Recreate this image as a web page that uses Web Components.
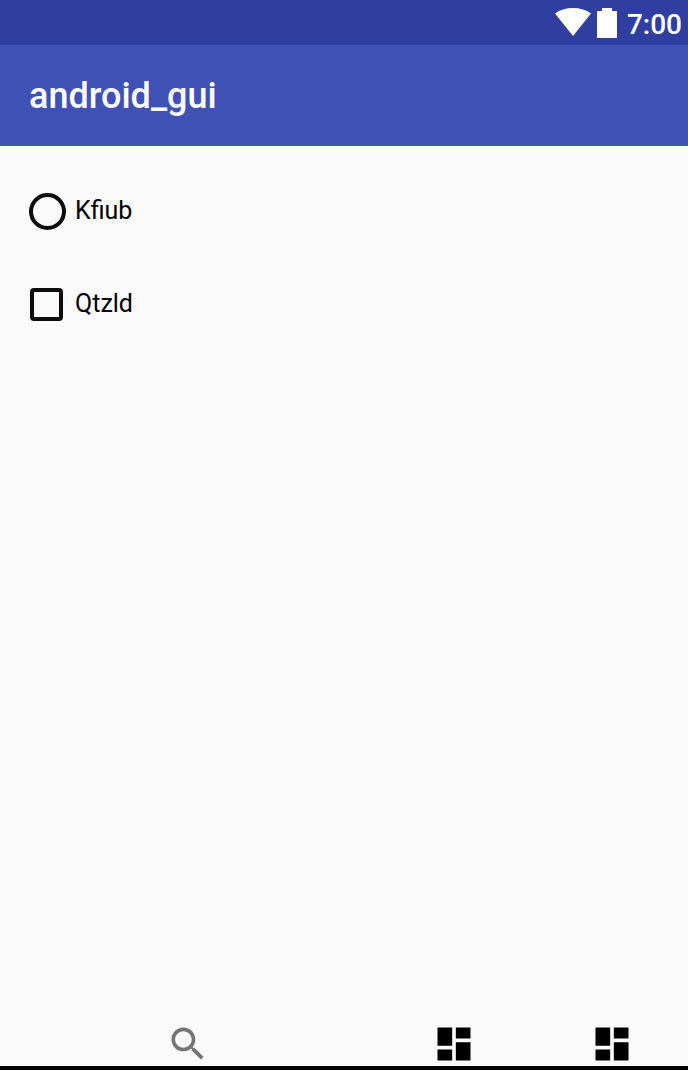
<!DOCTYPE html>
<html lang="en">
<head>
<meta charset="utf-8">
<meta name="viewport" content="width=device-width, initial-scale=1">
<title>android_gui</title>
<style>
html, body { margin: 0; height: 100%; background: #fafafa; font-family: Roboto, sans-serif; color: #000; }
</style>
</head>
<body>
<app-screen>
  <status-bar slot="top">7:00</status-bar>
  <app-bar slot="top">android_gui</app-bar>
  <choice-row type="radio">Kfiub</choice-row>
  <choice-row type="checkbox">Qtzld</choice-row>
  <tool-bar slot="bottom"></tool-bar>
</app-screen>
<script>
class AppScreen extends HTMLElement {
  constructor() {
    super();
    this.attachShadow({ mode: 'open' }).innerHTML = `
      <style>
        :host { display: flex; flex-direction: column; min-height: 100vh; }
        main { flex: 1; display: flex; flex-direction: column; gap: 45px; padding: 41px 28px; }
      </style>
      <slot name="top"></slot>
      <main><slot></slot></main>
      <slot name="bottom"></slot>`;
  }
}
class StatusBar extends HTMLElement {
  constructor() {
    super();
    this.attachShadow({ mode: 'open' }).innerHTML = `
      <style>
        :host { display: flex; align-items: center; justify-content: flex-end; gap: 6px; height: 45px;
          padding-right: 6px; background: #303f9f; color: #fff; }
        svg { display: block; fill: #fff; }
        time { font-size: 28px; line-height: 32px; font-weight: 500; padding: 4px 0 0 4px; }
      </style>
      <svg width="36" height="30" viewBox="0 0 36 30" aria-hidden="true"><path d="M0 5.500Q7.500 0 18 0T36 5.500L18 28Z"/></svg>
      <svg width="20" height="30" viewBox="0 0 20 30" aria-hidden="true"><path d="M5 0H15V3H20V30H0V3H5Z"/></svg>
      <time><slot></slot></time>`;
  }
}
class AppBar extends HTMLElement {
  constructor() {
    super();
    this.attachShadow({ mode: 'open' }).innerHTML = `
      <style>
        :host { display: flex; align-items: center; height: 101px; padding: 0 29px; background: #3f51b5; color: #fff; }
        h1 { margin: 0; font-size: 36px; line-height: 44px; font-weight: 500; }
      </style>
      <h1><slot></slot></h1>`;
  }
}
class ChoiceRow extends HTMLElement {
  constructor() {
    super();
    const type = this.getAttribute('type') === 'radio' ? 'radio' : 'checkbox';
    this.attachShadow({ mode: 'open' }).innerHTML = `
      <style>
        :host { display: block; }
        label { display: inline-flex; align-items: center; gap: 8px; height: 48px; font-size: 25px; line-height: 32px; cursor: pointer; }
        input { appearance: none; box-sizing: border-box; border: 4px solid #0c0c0c; flex: none; }
        input[type=radio] { width: 37px; height: 37px; margin: 0 1px; border-radius: 50%; }
        input[type=checkbox] { width: 33px; height: 33px; margin: 0 4px 0 2px; border-radius: 4px; }
        input[type=radio]:checked { background: radial-gradient(#0c0c0c 50%, transparent 52%); }
        input[type=checkbox]:checked { background: #0c0c0c; }
      </style>
      <label><input type="${type}"><span><slot></slot></span></label>`;
  }
}
class ToolBar extends HTMLElement {
  constructor() {
    super();
    const board = '<svg viewBox="0 0 24 24" aria-hidden="true"><path d="M3 13h8V3H3v10zm0 8h8v-6H3v6zm10 0h8V11h-8v10zm0-18v6h8V3h-8z"/></svg>';
    this.attachShadow({ mode: 'open' }).innerHTML = `
      <style>
        :host { display: flex; gap: 114px; padding: 0 54px 0 166px; border-bottom: 4px solid #000; }
        button { appearance: none; border: 0; padding: 0; background: none; color: #000; cursor: pointer; }
        .search { margin-right: auto; color: #757575; }
        svg { display: block; width: 44px; height: 44px; fill: currentColor; }
      </style>
      <button class="search" aria-label="Search"><svg viewBox="0 0 24 24" aria-hidden="true"><path d="M15.500 14h-.79l-.28-.27C15.410 12.590 16 11.110 16 9.500 16 5.910 13.090 3 9.500 3S3 5.910 3 9.500 5.910 16 9.500 16c1.610 0 3.090-.59 4.230-1.570l.27.28v.79l5 4.990L20.490 19l-4.990-5zm-6 0C7.010 14 5 11.990 5 9.500S7.010 5 9.500 5 14 7.010 14 9.500 11.990 14 9.500 14z"/></svg></button>
      <button aria-label="Dashboard">${board}</button>
      <button aria-label="Widgets">${board}</button>`;
  }
}
customElements.define('app-screen', AppScreen);
customElements.define('status-bar', StatusBar);
customElements.define('app-bar', AppBar);
customElements.define('choice-row', ChoiceRow);
customElements.define('tool-bar', ToolBar);
</script>
</body>
</html>
